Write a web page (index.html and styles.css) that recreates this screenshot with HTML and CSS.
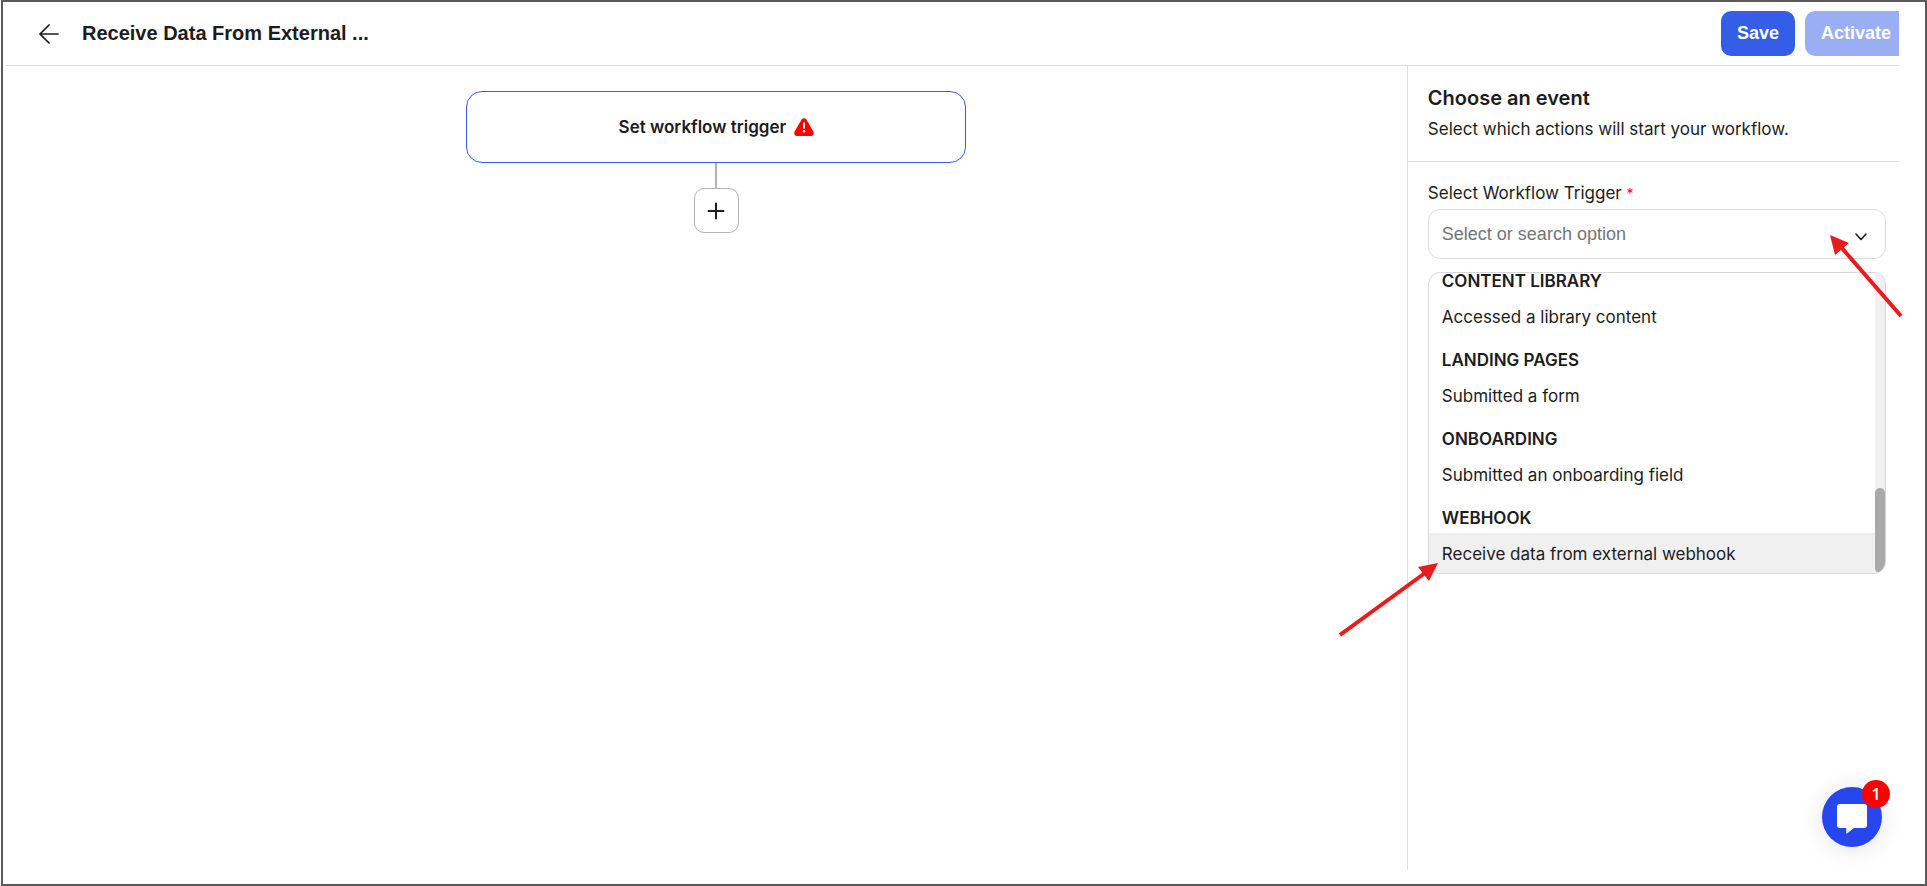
FILE: index.html
```
<!DOCTYPE html>
<html lang="en">
<head>
  <meta charset="UTF-8">
  <title>Workflow</title>
  <meta name="viewport" content="width=device-width, initial-scale=1.0">
  <link rel="stylesheet" href="styles.css">
</head>
<body>
  <div class="frame">
    <header class="topbar">
      <button class="back" aria-label="Back">
        <svg width="20" height="20" viewBox="0 0 20 20" fill="none" stroke="currentColor" stroke-width="1.7" stroke-linecap="round" stroke-linejoin="round"><path d="M19 10H1M10 1L1 10L10 19"/></svg>
      </button>
      <h1>Receive Data From External ...</h1>
      <button class="btn">Save</button>
      <button class="btn btn-activate" disabled>Activate</button>
    </header>

    <div class="content">
      <main class="canvas">
        <button class="trigger">
          Set workflow trigger
          <svg width="20" height="18" viewBox="0 0 20 18"><path d="M7.6 1.6Q10-1.2 12.4 1.6L19.4 13.5Q20.6 17.8 16.8 18H3.2Q-.6 17.8.6 13.5Z" fill="#f00"/><path d="M10 5.2V9.8" stroke="#fff" stroke-width="2" stroke-linecap="round"/><circle cx="10" cy="13.2" r="1.2" fill="#fff"/></svg>
        </button>
        <div class="connector"></div>
        <button class="add" aria-label="Add step">
          <svg width="18" height="18" viewBox="0 0 18 18" fill="none" stroke="currentColor" stroke-width="2" stroke-linecap="round"><path d="M9 1.5V16.5M1.5 9H16.5"/></svg>
        </button>
      </main>

      <aside class="panel">
        <div class="panel-head">
          <h2>Choose an event</h2>
          <p>Select which actions will start your workflow.</p>
        </div>
        <div class="panel-body">
          <label for="trigger">Select Workflow Trigger <span class="required">*</span></label>
          <div class="search">
            <input type="text" id="trigger" placeholder="Select or search option">
            <svg width="12" height="8" viewBox="0 0 12 8" fill="none" stroke="currentColor" stroke-width="1.6" stroke-linecap="round" stroke-linejoin="round"><path d="M1 1L6 6.5L11 1"/></svg>
          </div>
          <div class="dropdown">
            <div class="options">
              <h3>CONTENT LIBRARY</h3>
              <a href="#">Accessed a library content</a>
              <h3>LANDING PAGES</h3>
              <a href="#">Submitted a form</a>
              <h3>ONBOARDING</h3>
              <a href="#">Submitted an onboarding field</a>
              <h3>WEBHOOK</h3>
              <a href="#" class="active">Receive data from external webhook</a>
            </div>
            <div class="track"><div class="thumb"></div></div>
          </div>
        </div>

        <!-- pointers to the select box and the webhook option -->
        <svg class="pointer pointer-select" width="74" height="84" viewBox="0 0 74 84" fill="#e81c1c"><path d="M0 0L19 8L5 20Z"/><path d="M11 12L71 81" stroke="#e81c1c" stroke-width="4"/></svg>
        <svg class="pointer pointer-option" width="100" height="74" viewBox="0 0 100 74" fill="#e81c1c"><path d="M99 0L79 4L90 18Z"/><path d="M86 10L1 72" stroke="#e81c1c" stroke-width="4"/></svg>

        <button class="chat" aria-label="Open chat">
          <svg width="30" height="30" viewBox="0 0 30 30" fill="#fff"><path d="M3 0H27Q30 0 30 3V21Q30 24 27 24H17L10 29.5Q9.3 29.8 9.3 29V24H3Q0 24 0 21V3Q0 0 3 0Z"/></svg>
          <span class="badge">1</span>
        </button>
      </aside>
    </div>
  </div>
</body>
</html>
```
FILE: styles.css
```
:root {
  --text: #1c1c1c;
  --blue: #345ee8;
  --line: #dcdcdc;
}

* {
  box-sizing: border-box;
}

body {
  margin: 0;
  padding-left: 1px;
  font-family: Inter, sans-serif;
  font-size: 17px;
  color: var(--text);
  background: #fff;
}

button {
  font: inherit;
  color: inherit;
  cursor: pointer;
}

.frame {
  display: flex;
  flex-direction: column;
  min-height: 100vh;
  padding: 0 26px 14px 3px;
  border: 2px solid #5a5a5a;
}

.topbar {
  display: flex;
  align-items: center;
  height: 64px;
  padding-left: 33px;
  border-bottom: 1px solid var(--line);
  overflow: hidden;
}

.back {
  display: flex;
  padding: 0;
  border: none;
  background: none;
}

h1 {
  flex: 1;
  margin: 0 0 0 23px;
  font: bold 20px "Liberation Sans", sans-serif;
}

.btn {
  height: 45px;
  padding: 0 16px;
  border: none;
  border-radius: 10px;
  background: var(--blue);
  color: #fff;
  font: bold 18px "Liberation Sans", sans-serif;
}

.btn-activate {
  margin: 0 -8px 0 10px;
  background: #9aaff3;
}

.content {
  display: flex;
  flex: 1;
}

.canvas {
  flex: 1;
  display: flex;
  flex-direction: column;
  align-items: center;
  padding: 25px 0 0 20px;
}

.trigger {
  display: flex;
  align-items: center;
  justify-content: center;
  gap: 8px;
  width: 100%;
  max-width: 500px;
  height: 72px;
  border: 1px solid var(--blue);
  border-radius: 16px;
  background: #fff;
  font-weight: 600;
}

.connector {
  width: 2px;
  height: 25px;
  background: #b3b1bd;
}

.add {
  display: flex;
  align-items: center;
  justify-content: center;
  width: 45px;
  height: 45px;
  padding: 0;
  border: 1px solid #b3b1bd;
  border-radius: 10px;
  background: #fff;
}

.panel {
  position: relative;
  width: 26%;
  min-width: 380px;
  border-left: 1px solid var(--line);
}

.panel-head {
  height: 96px;
  padding: 18px 20px 0;
  border-bottom: 1px solid var(--line);
}

h2 {
  margin: 0;
  font-size: 20px;
  font-weight: 600;
  line-height: 28px;
}

.panel-head p {
  margin: 4px 0 0;
  line-height: 26px;
}

.panel-body {
  padding: 18px 13px 0 20px;
}

.panel-body label {
  display: block;
  line-height: 26px;
  margin-bottom: 2px;
}

.required {
  color: #f00;
  font-size: 14px;
}

.search {
  display: flex;
  align-items: center;
  height: 50px;
  padding: 0 18px 0 13px;
  border: 1px solid var(--line);
  border-radius: 12px;
}

.search input {
  flex: 1;
  min-width: 0;
  padding: 0;
  border: none;
  outline: none;
  background: none;
  font: 18px "Liberation Sans", sans-serif;
}

.search input::placeholder {
  color: #757575;
}

.search svg {
  margin-top: 6px;
}

.dropdown {
  display: flex;
  height: 302px;
  margin-top: 13px;
  border: 1px solid #d5d5dc;
  border-radius: 12px;
  overflow: hidden;
}

/* list is scrolled to its end */
.options {
  flex: 1;
  display: flex;
  flex-direction: column;
  justify-content: flex-end;
}

.options h3 {
  flex: none;
  margin: 0;
  padding: 14px 13px 5px;
  font-size: 17px;
  font-weight: 600;
  line-height: 20px;
}

.options a {
  flex: none;
  padding: 8px 13px 6px;
  line-height: 26px;
  color: inherit;
  text-decoration: none;
}

.options a.active {
  background: #f0f0f0;
}

.track {
  display: flex;
  align-items: flex-end;
  width: 10px;
  background: #f0f0f0;
}

.thumb {
  width: 10px;
  height: 85px;
  border-radius: 5px;
  background: #a9a9a9;
}

.pointer {
  position: absolute;
}

.pointer-select {
  top: 169px;
  right: -5px;
}

.pointer-option {
  top: 497px;
  left: -69px;
}

.chat {
  position: absolute;
  right: 17px;
  bottom: 23px;
  display: flex;
  align-items: center;
  justify-content: center;
  width: 60px;
  height: 60px;
  padding: 3px 0 0;
  border: none;
  border-radius: 50%;
  background: #2646f0;
  box-shadow: 0 2px 24px rgba(0, 0, 0, 0.12);
}

.badge {
  position: absolute;
  top: -7px;
  right: -8px;
  width: 28px;
  border-radius: 14px;
  background: #f00;
  color: #fff;
  font: 600 16px/28px "Open Sans", sans-serif;
}
```
